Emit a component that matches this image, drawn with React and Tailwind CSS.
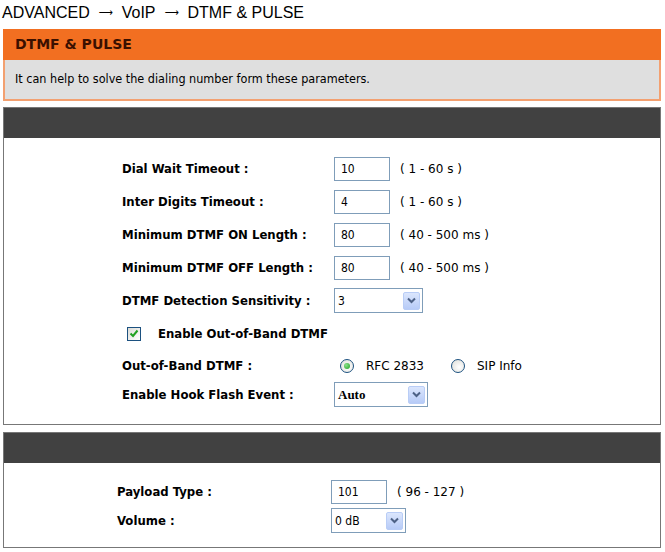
import React from "react";

const tahoma = { fontFamily: '"DejaVu Sans", sans-serif', fontStretch: "condensed" };
const normal = { fontFamily: '"DejaVu Sans", sans-serif', fontStretch: "normal" };

function Arrow() {
  return (
    <span className="flex h-[18px] w-[17px] items-center justify-center rounded-[2px] border border-[#b9cdf6] bg-[linear-gradient(#dbe6fd,#b7cbf7)]">
      <svg width="9" height="7" viewBox="0 0 9 7">
        <path d="M1 1.5 L4.5 5 L8 1.5" fill="none" stroke="#4d6185" strokeWidth="2" />
      </svg>
    </span>
  );
}

function TextBox({ value, w = "w-[56px]" }) {
  return (
    <div className={`flex h-[24px] ${w} items-center border border-[#7f9db9] bg-white pl-[6px] text-[12px] text-black`}>
      {value}
    </div>
  );
}

function Select({ value, w, serif }) {
  return (
    <div className={`flex h-[25px] ${w} items-center justify-between border border-[#7f9db9] bg-white pl-[3px] pr-[2px] text-[12px] text-black`}>
      <span className={serif ? "font-bold text-[13px]" : ""} style={serif ? { fontFamily: '"Liberation Serif", serif' } : undefined}>{value}</span>
      <Arrow />
    </div>
  );
}

function Radio({ checked }) {
  return (
    <span className="flex h-[14px] w-[14px] items-center justify-center rounded-full border border-[#1c5180] bg-[radial-gradient(circle_at_60%_60%,#ffffff,#dcdcd6)]">
      {checked && <span className="h-[6px] w-[6px] rounded-full bg-[radial-gradient(circle_at_35%_35%,#8be28b,#21a121)]" />}
    </span>
  );
}

function Row({ h, label, children, lw = "w-[212px]" }) {
  return (
    <div className={`flex ${h} items-center`}>
      <div className={`${lw} shrink-0 text-[13px] font-bold text-black`}>{label}</div>
      {children}
    </div>
  );
}

function Hint({ children }) {
  return <span className="ml-[10px] text-[12px] text-black" style={normal}>{children}</span>;
}

function Crumb() {
  return (
    <span className="mx-[8px] inline-block w-[16px] text-center text-[11px] leading-[19px]" style={{ fontFamily: '"DejaVu Sans", sans-serif' }}>
      &#x27F6;
    </span>
  );
}

export default function App() {
  return (
    <div className="h-[552px] w-[665px] overflow-hidden bg-white" style={tahoma}>
      <div className="flex h-[22px] items-center pl-[2px] pt-[2px] text-[16px] leading-[19px] text-black" style={{ fontFamily: '"Liberation Sans", Arial, sans-serif' }}>
        <span>ADVANCED</span>
        <Crumb />
        <span>VoIP</span>
        <Crumb />
        <span>DTMF &amp; PULSE</span>
      </div>

      <div className="ml-[3px] mt-[7px] w-[658px]">
        <div className="flex h-[31px] items-center bg-[#f26f21] pl-[12px] text-[14px] font-bold text-[#3a1000]" style={normal}>
          DTMF &amp; PULSE
        </div>
        <div className="flex h-[41px] items-center border-[2px] border-t-0 border-[#f3a070] bg-[#dfdfdf] pl-[10px] text-[12.5px] text-black">
          It can help to solve the dialing number form these parameters.
        </div>
      </div>

      <div className="ml-[3px] mt-[6px] w-[658px] border border-[#777]">
        <div className="h-[30px] bg-[#414141]" />
        <div className="flex h-[286px] flex-col bg-white pl-[118px] pt-[14px]">
          <Row h="h-[33px]" label="Dial Wait Timeout :">
            <TextBox value="10" />
            <Hint>( 1 - 60 s )</Hint>
          </Row>
          <Row h="h-[33px]" label="Inter Digits Timeout :">
            <TextBox value="4" />
            <Hint>( 1 - 60 s )</Hint>
          </Row>
          <Row h="h-[33px]" label="Minimum DTMF ON Length :">
            <TextBox value="80" />
            <Hint>( 40 - 500 ms )</Hint>
          </Row>
          <Row h="h-[33px]" label="Minimum DTMF OFF Length :">
            <TextBox value="80" />
            <Hint>( 40 - 500 ms )</Hint>
          </Row>
          <Row h="h-[33px]" label="DTMF Detection Sensitivity :">
            <Select value="3" w="w-[89px]" />
          </Row>
          <div className="flex h-[33px] items-center pl-[5px]">
            <span className="flex h-[14px] w-[14px] items-center justify-center border border-[#1c5180] bg-[linear-gradient(135deg,#dcdcd6,#ffffff)]">
              <svg width="10" height="9" viewBox="0 0 10 9">
                <path d="M1.5 4.5 L4 7 L8.5 1.5" fill="none" stroke="#21a121" strokeWidth="2" />
              </svg>
            </span>
            <span className="ml-[17px] text-[13px] font-bold text-black">Enable Out-of-Band DTMF</span>
          </div>
          <Row h="h-[31px]" label="Out-of-Band DTMF :">
            <span className="ml-[6px]"><Radio checked /></span>
            <span className="ml-[12px] text-[12px] text-black" style={normal}>RFC 2833</span>
            <span className="ml-[27px]"><Radio /></span>
            <span className="ml-[12px] text-[12px] text-black" style={normal}>SIP Info</span>
          </Row>
          <Row h="h-[27px]" label="Enable Hook Flash Event :">
            <Select value="Auto" w="w-[94px]" serif />
          </Row>
        </div>
      </div>

      <div className="ml-[3px] mt-[7px] w-[658px] border border-[#777]">
        <div className="h-[30px] bg-[#414141]" />
        <div className="flex h-[84px] flex-col bg-white pl-[113px] pt-[14px]">
          <Row h="h-[29px]" label="Payload Type :" lw="w-[214px]">
            <TextBox value="101" />
            <Hint>( 96 - 127 )</Hint>
          </Row>
          <Row h="h-[29px]" label="Volume :" lw="w-[214px]">
            <Select value="0 dB" w="w-[75px]" />
          </Row>
        </div>
      </div>
    </div>
  );
}
